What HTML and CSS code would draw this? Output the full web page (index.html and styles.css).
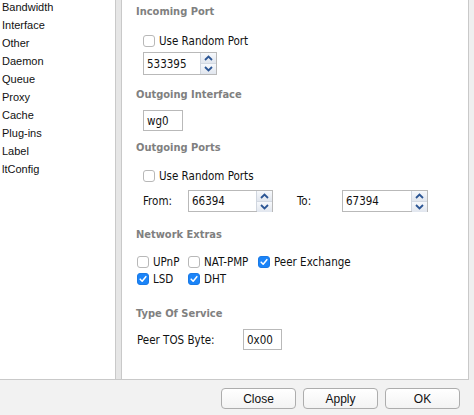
FILE: index.html
```html
<!DOCTYPE html>
<html>
<head>
<meta charset="utf-8">
<link rel="stylesheet" href="styles.css">
</head>
<body>
<div class="window">
  <div class="main">
    <ul class="sidebar">
      <li>Bandwidth</li>
      <li>Interface</li>
      <li>Other</li>
      <li>Daemon</li>
      <li>Queue</li>
      <li>Proxy</li>
      <li>Cache</li>
      <li>Plug-ins</li>
      <li>Label</li>
      <li>ltConfig</li>
    </ul>
    <div class="splitter"></div>
    <div class="panel">
      <div class="heading h-incoming">Incoming Port</div>
      <label class="check indent r-random1"><span class="box"></span>Use Random Port</label>
      <div class="spin r-spin1 w74"><span class="val">533395</span><span class="arrows"><span class="half"><svg width="15" height="10" viewBox="0 0 15 10"><path d="M4 7 L7.5 3.5 L11 7" fill="none" stroke="#2b5594" stroke-width="1.8"/></svg></span><span class="half"><svg width="15" height="10" viewBox="0 0 15 10"><path d="M4 3 L7.5 6.5 L11 3" fill="none" stroke="#2b5594" stroke-width="1.8"/></svg></span></span></div>
      <div class="heading h-outif">Outgoing Interface</div>
      <div class="field r-wg0">wg0</div>
      <div class="heading h-outports">Outgoing Ports</div>
      <label class="check indent r-random2"><span class="box"></span>Use Random Ports</label>
      <div class="ports">
        <span class="lbl from-lbl">From:</span>
        <div class="spin w85"><span class="val">66394</span><span class="arrows"><span class="half"><svg width="15" height="10" viewBox="0 0 15 10"><path d="M4 7 L7.5 3.5 L11 7" fill="none" stroke="#2b5594" stroke-width="1.8"/></svg></span><span class="half"><svg width="15" height="10" viewBox="0 0 15 10"><path d="M4 3 L7.5 6.5 L11 3" fill="none" stroke="#2b5594" stroke-width="1.8"/></svg></span></span></div>
        <span class="lbl to-lbl">To:</span>
        <div class="spin w86"><span class="val">67394</span><span class="arrows"><span class="half"><svg width="15" height="10" viewBox="0 0 15 10"><path d="M4 7 L7.5 3.5 L11 7" fill="none" stroke="#2b5594" stroke-width="1.8"/></svg></span><span class="half"><svg width="15" height="10" viewBox="0 0 15 10"><path d="M4 3 L7.5 6.5 L11 3" fill="none" stroke="#2b5594" stroke-width="1.8"/></svg></span></span></div>
      </div>
      <div class="heading h-extras">Network Extras</div>
      <div class="extras">
        <label class="check"><span class="box"></span>UPnP</label>
        <label class="check"><span class="box"></span>NAT-PMP</label>
        <label class="check"><span class="box on"><svg width="12" height="12" viewBox="0 0 12 12"><path d="M2.6 6.2 L5 8.6 L9.4 3.2" fill="none" stroke="#fff" stroke-width="1.8" stroke-linecap="round" stroke-linejoin="round"/></svg></span>Peer Exchange</label>
        <label class="check"><span class="box on"><svg width="12" height="12" viewBox="0 0 12 12"><path d="M2.6 6.2 L5 8.6 L9.4 3.2" fill="none" stroke="#fff" stroke-width="1.8" stroke-linecap="round" stroke-linejoin="round"/></svg></span>LSD</label>
        <label class="check"><span class="box on"><svg width="12" height="12" viewBox="0 0 12 12"><path d="M2.6 6.2 L5 8.6 L9.4 3.2" fill="none" stroke="#fff" stroke-width="1.8" stroke-linecap="round" stroke-linejoin="round"/></svg></span>DHT</label>
      </div>
      <div class="heading h-tos">Type Of Service</div>
      <div class="tos">
        <span class="lbl">Peer TOS Byte:</span>
        <div class="field tos-field">0x00</div>
      </div>
    </div>
    <div class="rightgap"></div>
  </div>
  <div class="buttons">
    <button class="btn">Close</button>
    <button class="btn">Apply</button>
    <button class="btn">OK</button>
  </div>
</div>
</body>
</html>
```
FILE: styles.css
```css
* { box-sizing: border-box; }
html, body { margin: 0; padding: 0; }
body {
  background: #f2f2f2;
  width: 474px;
  height: 415px;
  overflow: hidden;
  font-family: "DejaVu Sans Condensed", "Liberation Sans", sans-serif;
  font-size: 11.5px;
  color: #111;
}
.window { display: flex; flex-direction: column; height: 415px; }
.main { display: flex; height: 380px; }

.sidebar {
  list-style: none;
  margin: 0;
  padding: 0;
  width: 116px;
  height: 380px;
  background: #fff;
  border-right: 1px solid #c9c9c9;
  border-bottom: 1px solid #c9c9c9;
  overflow: hidden;
  font-family: "Liberation Sans", Arial, sans-serif;
  font-size: 11px;
  color: #111;
}
.sidebar li {
  height: 18px;
  line-height: 18px;
  padding-left: 2px;
}
.sidebar li:first-child { margin-top: -2px; }

.splitter {
  width: 5px;
  height: 380px;
  background: #e6e6e6;
  border-bottom: 1px solid #c9c9c9;
}
.panel {
  width: 348px;
  height: 380px;
  background: #fff;
  border: 1px solid #c9c9c9;
  border-top: none;
  padding: 4px 0 0 14px;
  display: flex;
  flex-direction: column;
  align-items: flex-start;
}
.rightgap { flex: 1; background: #efefef; }

.heading {
  height: 16px;
  line-height: 16px;
  font-weight: bold;
  color: #808080;
  font-size: 11px;
}
.check {
  display: flex;
  align-items: center;
  height: 16px;
  white-space: nowrap;
}
.check.indent { margin-left: 7px; }
.box {
  width: 12px;
  height: 12px;
  border: 1px solid #b8b8b8;
  border-radius: 3px;
  background: #fff;
  margin-right: 4px;
  display: flex;
  align-items: center;
  justify-content: center;
  flex: none;
}
.box.on { background: #1b84f8; border-color: #1a7ae6; }
.box svg { display: block; }

.r-random1 { margin-top: 13px; }
.r-spin1 { margin-top: 3px; margin-left: 7px; }
.h-outif { margin-top: 12px; }
.r-wg0 { margin-top: 7px; margin-left: 7px; }
.h-outports { margin-top: 9px; }
.r-random2 { margin-top: 12px; }
.h-extras { margin-top: 15px; }
.h-tos { margin-top: 19px; }

.spin {
  display: flex;
  border: 1px solid #b9b9b9;
  background: #fff;
}
.spin .val {
  flex: 1;
  display: flex;
  align-items: center;
  padding-left: 3px;
}
.spin .arrows {
  width: 16px;
  border-left: 1px solid #d0d6df;
  display: flex;
  flex-direction: column;
}
.spin .half {
  flex: 1;
  display: flex;
  align-items: center;
  justify-content: center;
  background: linear-gradient(#f7f9fc, #e1e6ee);
}
.spin .half + .half { border-top: 1px solid #d3d9e2; }
.spin .arrows svg { display: block; }
.w74 { width: 74px; height: 23px; }
.w85 { width: 85px; height: 22px; }
.w86 { width: 86px; height: 22px; }

.field {
  border: 1px solid #b9b9b9;
  background: #fff;
  display: flex;
  align-items: center;
  padding-left: 3px;
}
.r-wg0 { width: 40px; height: 21px; }

.ports {
  display: flex;
  align-items: center;
  margin-top: 6px;
  margin-left: 7px;
}
.from-lbl { width: 45px; }
.to-lbl { width: 45px; margin-left: 24px; }

.extras {
  display: grid;
  grid-template-columns: 51px 70px auto;
  grid-auto-rows: 17px;
  margin-top: 10px;
  margin-left: 1px;
}
.extras .check { height: 17px; }

.tos {
  display: flex;
  align-items: center;
  margin-top: 7px;
  margin-left: 1px;
}
.tos .lbl { width: 106px; }
.tos-field { width: 39px; height: 21px; }

.buttons {
  display: flex;
  justify-content: flex-end;
  gap: 7px;
  padding: 8px 14px 0 0;
}
.btn {
  width: 75px;
  height: 21px;
  border: 1px solid #adadad;
  border-radius: 4px;
  background: linear-gradient(#ffffff, #f3f3f3);
  font-family: "Liberation Sans", Arial, sans-serif;
  font-size: 12px;
  color: #111;
  padding: 0;
}
```
